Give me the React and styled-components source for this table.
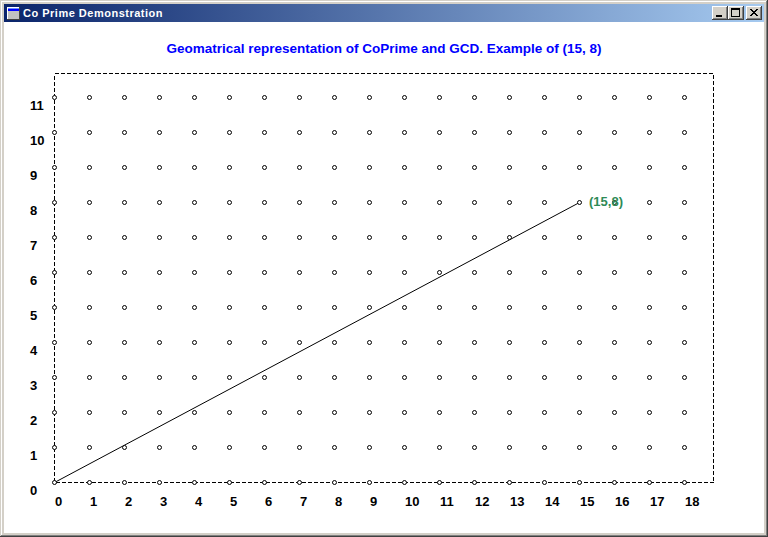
import React from "react";
import styled, { createGlobalStyle } from "styled-components";

// Co Prime window: caption bar + white client with the lattice plot

const GlobalStyle = createGlobalStyle`
  html, body {
    margin: 0;
    padding: 0;
    background: #d4d0c8;
  }
  body {
    font-family: "Liberation Sans", Arial, sans-serif;
  }
`;

const Window = styled.div`
  width: 768px;
  height: 537px;
  box-sizing: border-box;
  padding: 4px;
  background: #d4d0c8;
  box-shadow: inset -1px -1px #404040, inset 1px 1px #d4d0c8,
    inset -2px -2px #808080, inset 2px 2px #ffffff;
  display: flex;
  flex-direction: column;
`;

const TitleBar = styled.div`
  height: 18px;
  flex: none;
  display: flex;
  align-items: center;
  padding: 0 2px 0 1px;
  background: linear-gradient(to right, #0a246a, #a6caf0);
  color: #ffffff;
`;

const TitleText = styled.span`
  flex: 1;
  margin-left: 2px;
  font: bold 11px/18px "Liberation Sans", Arial, sans-serif;
  letter-spacing: 0.5px;
  white-space: nowrap;
`;

const CaptionButtons = styled.div`
  display: flex;
  align-items: center;
`;

const CaptionButton = styled.div`
  width: 16px;
  height: 14px;
  margin-left: ${p => (p.$gap ? "2px" : "0")};
  background: #d4d0c8;
  box-shadow: inset -1px -1px #404040, inset 1px 1px #ffffff,
    inset -2px -2px #808080, inset 2px 2px #d4d0c8;
  svg {
    display: block;
  }
`;

const Client = styled.div`
  flex: 1;
  background: #ffffff;
  display: flex;
  flex-direction: column;
  overflow: hidden;
`;

const Heading = styled.div`
  height: 50px;
  flex: none;
  box-sizing: border-box;
  padding-top: 19px;
  text-align: center;
  color: #0000ff;
  font: bold 13.5px/15px "Liberation Sans", Arial, sans-serif;
  white-space: nowrap;
`;

const Chart = styled.svg`
  display: block;
  flex: none;
  text {
    font-family: "Liberation Sans", Arial, sans-serif;
    font-weight: bold;
    font-size: 13px;
  }
`;

const OX = 54;
const OY = 482;
const STEP = 35;
const COLS = 18;
const ROWS = 11;

const AppIcon = () => (
  <svg width="16" height="16" viewBox="0 0 16 16" shapeRendering="crispEdges">
    <rect x="2" y="2" width="13" height="13" fill="#404040" />
    <rect x="2" y="2" width="12" height="12" fill="#ffffff" />
    <rect x="3" y="3" width="11" height="11" fill="#c0c0c0" />
    <rect x="3" y="3" width="11" height="3" fill="#0000ff" />
    <rect x="3" y="3" width="11" height="1" fill="#6a8cff" />
  </svg>
);

const MinGlyph = () => (
  <svg width="16" height="14" shapeRendering="crispEdges">
    <rect x="4" y="9" width="6" height="2" fill="#000" />
  </svg>
);

const MaxGlyph = () => (
  <svg width="16" height="14" shapeRendering="crispEdges">
    <rect x="3" y="2" width="9" height="2" fill="#000" />
    <rect x="3" y="2" width="1" height="9" fill="#000" />
    <rect x="11" y="2" width="1" height="9" fill="#000" />
    <rect x="3" y="10" width="9" height="1" fill="#000" />
  </svg>
);

const CloseGlyph = () => (
  <svg width="16" height="14" shapeRendering="crispEdges">
    {[0, 1, 2, 3, 4, 5, 6].map(i => (
      <g key={i}>
        <rect x={4 + i} y={3 + i} width="2" height="1" fill="#000" />
        <rect x={10 - i} y={3 + i} width="2" height="1" fill="#000" />
      </g>
    ))}
  </svg>
);

function Plot() {
  const dots = [];
  for (let i = 0; i <= COLS; i++) {
    for (let j = 0; j <= ROWS; j++) {
      dots.push(
        <circle
          key={`${i}-${j}`}
          cx={OX + i * STEP + 0.5}
          cy={OY - j * STEP + 0.5}
          r="2"
          fill="#ffffff"
          stroke="#000000"
          strokeWidth="1"
        />
      );
    }
  }

  return (
    <Chart width="760" height="461" viewBox="0 0 760 461">
      <g transform="translate(-4 -72)">
        <rect
          x={OX + 0.5}
          y={73.5}
          width={713 - OX}
          height={OY - 73}
          fill="none"
          stroke="#000"
          strokeWidth="1"
          strokeDasharray="4 2"
          shapeRendering="crispEdges"
        />
        <line
          x1={OX + 0.5}
          y1={OY + 0.5}
          x2={OX + 15 * STEP + 0.5}
          y2={OY - 8 * STEP + 0.5}
          stroke="#000"
          strokeWidth="1"
        />
        {dots}
        {Array.from({ length: ROWS + 1 }, (_, j) => (
          <text key={`y${j}`} x="30" y={OY - j * STEP + 13} fill="#000">
            {j}
          </text>
        ))}
        {Array.from({ length: COLS + 1 }, (_, i) => (
          <text key={`x${i}`} x={OX + i * STEP + 1} y="506" fill="#000">
            {i}
          </text>
        ))}
        <text x="589" y="206" fill="#2e8b57">
          (15,8)
        </text>
      </g>
    </Chart>
  );
}

export default function App() {
  return (
    <>
      <GlobalStyle />
      <Window>
        <TitleBar>
          <AppIcon />
          <TitleText>Co Prime Demonstration</TitleText>
          <CaptionButtons>
            <CaptionButton>
              <MinGlyph />
            </CaptionButton>
            <CaptionButton>
              <MaxGlyph />
            </CaptionButton>
            <CaptionButton $gap>
              <CloseGlyph />
            </CaptionButton>
          </CaptionButtons>
        </TitleBar>
        <Client>
          <Heading>
            Geomatrical representation of CoPrime and GCD. Example of (15, 8)
          </Heading>
          <Plot />
        </Client>
      </Window>
    </>
  );
}
